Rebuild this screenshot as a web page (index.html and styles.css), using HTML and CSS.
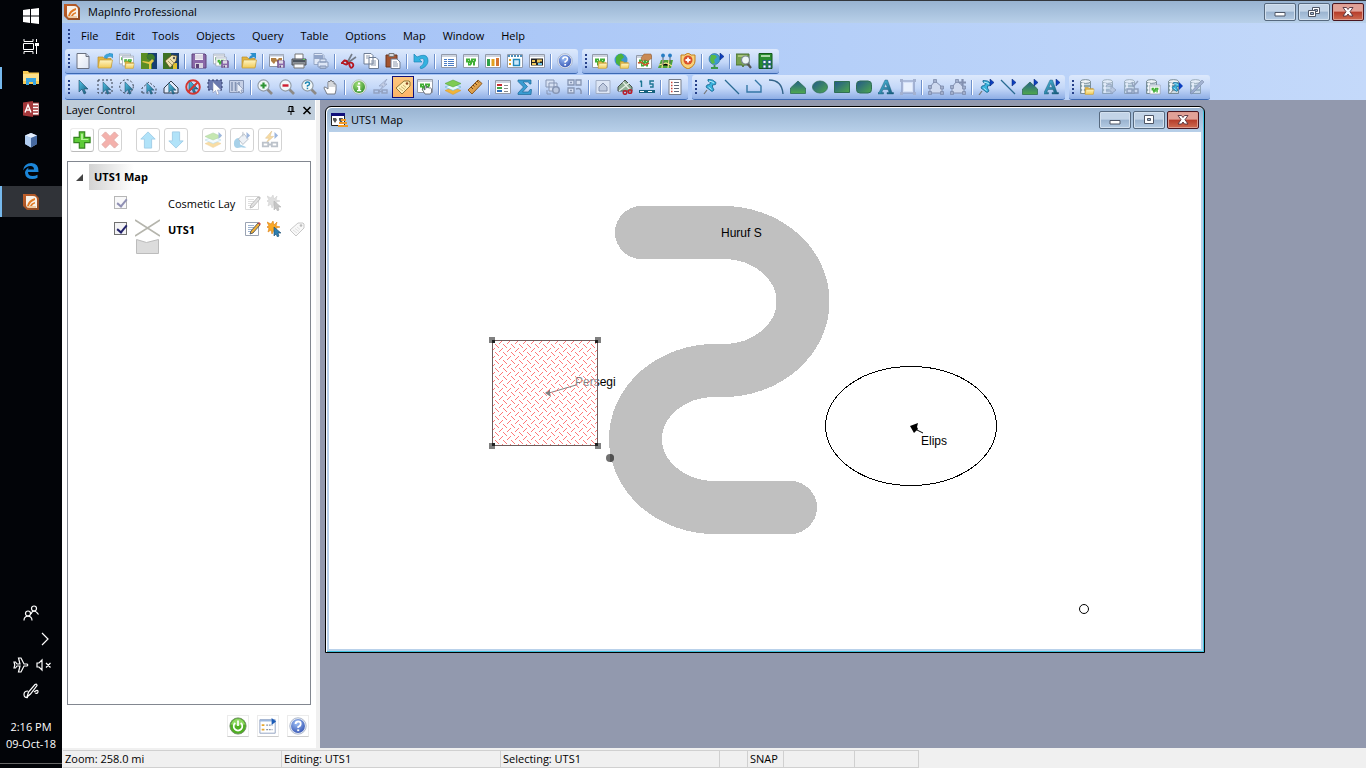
FILE: index.html
```html
<!DOCTYPE html>
<html lang="en">
<head>
<meta charset="utf-8">
<title>MapInfo Professional</title>
<link rel="stylesheet" href="styles.css">
</head>
<body>
<svg class="sprite" aria-hidden="true">
  <defs>
    <linearGradient id="g-green" x1="0" y1="0" x2="1" y2="1"><stop offset="0" stop-color="#22578c"/><stop offset="1" stop-color="#4fa84c"/></linearGradient>
    <linearGradient id="g-greenv" x1="0" y1="0" x2="0" y2="1"><stop offset="0" stop-color="#25608a"/><stop offset="1" stop-color="#4fa84c"/></linearGradient>
    <linearGradient id="g-cyan" x1="0" y1="0" x2="1" y2="1"><stop offset="0" stop-color="#53c4e8"/><stop offset="1" stop-color="#135878"/></linearGradient>
    <linearGradient id="g-folder" x1="0" y1="0" x2="0" y2="1"><stop offset="0" stop-color="#fff6c4"/><stop offset="1" stop-color="#f0c955"/></linearGradient>
    <linearGradient id="g-doc" x1="0" y1="0" x2="1" y2="1"><stop offset="0" stop-color="#fff"/><stop offset="1" stop-color="#dce4f2"/></linearGradient>
    <radialGradient id="g-ball" cx=".4" cy=".3" r=".8"><stop offset="0" stop-color="#9fc0f5"/><stop offset="1" stop-color="#2f4fb0"/></radialGradient>
    <radialGradient id="g-gball" cx=".4" cy=".3" r=".8"><stop offset="0" stop-color="#a6e07a"/><stop offset="1" stop-color="#2b8a25"/></radialGradient>
    <linearGradient id="g-orange" x1="0" y1="0" x2="1" y2="1"><stop offset="0" stop-color="#c2602a"/><stop offset="1" stop-color="#8e4a22"/></linearGradient>
  </defs>

  <symbol id="cursor" viewBox="0 0 16 16"><path d="M4 1v12l3-3 2 5 2-1-2-4h4z" fill="url(#g-cyan)" stroke="#1c4a66" stroke-width=".6"/></symbol>
  <symbol id="folder" viewBox="0 0 16 16"><path d="M1 14V4h5l1 1.500h7V14z" fill="#e3b640" stroke="#b98d2c" stroke-width=".7"/><path d="M1 15l1.500-8h13L14 15z" fill="url(#g-folder)" stroke="#c29a35" stroke-width=".7"/></symbol>
  <symbol id="mapwin" viewBox="0 0 16 16"><path d="M.5 1.500h15v13H.5z" fill="#fff" stroke="#929aaa"/><path d="M1 2h14v2H1z" fill="#cdd4df"/><path d="M3 5.500h4v2h1v-2h5v3h-1v4h-2v-3H9v2H8v1H5v-3H3z" fill="#3fae35"/><path d="M5 7h1v1H5zM10 7h1v1h-1zM6 10h1v1H6z" fill="#b6e6a8"/></symbol>
  <symbol id="floppy" viewBox="0 0 16 16"><path d="M1 1h13l1 1v13H1z" fill="#8a68a8" stroke="#5e457c"/><path d="M4 1h8v6H4z" fill="#f0eef5"/><path d="M4 3h8M4 5h8" stroke="#bbb5c8" stroke-width=".7"/><path d="M4 10h8v5H4z" fill="#d8d4e0"/><path d="M5 11h3v4H5z" fill="#5c4278"/></symbol>
  <symbol id="db" viewBox="0 0 16 16"><path d="M1.500 2.500h10v12h-10z" fill="#cddbe3" stroke="#6f858f" stroke-width=".9"/><ellipse cx="6.500" cy="2.500" rx="5" ry="1.900" fill="#eef4f8" stroke="#6f858f" stroke-width=".9"/><path d="M2 7h9M2 11h9" stroke="#47707a" stroke-width="1.200"/><path d="M4 4v10" stroke="#fff" stroke-width="1.600"/></symbol>
  <symbol id="flyout" viewBox="0 0 16 16"><path d="M12 0l4 3.500-4 3.500z" fill="#0c3fc0" stroke="#06246f" stroke-width=".5"/></symbol>
  <symbol id="help" viewBox="0 0 16 16"><circle cx="8" cy="8" r="7.300" fill="#eef2fa" stroke="#9aa6bd" stroke-width=".7"/><circle cx="8" cy="8" r="6.200" fill="url(#g-ball)"/><path d="M5.800 6.200Q6 4 8.200 4t2.200 2-2.200 2.700v1.100" fill="none" stroke="#fff" stroke-width="1.600"/><path d="M7.300 11h1.800v1.600H7.300z" fill="#fff"/></symbol>
  <symbol id="lens" viewBox="0 0 16 16"><path d="M10 10l5 5" stroke="#8d8a86" stroke-width="2.600"/><circle cx="6.500" cy="6.500" r="5.600" fill="#f1f7f8" stroke="#8f9aa6" stroke-width="1.100"/></symbol>
  <symbol id="pin" viewBox="0 0 16 16"><path d="M2 15l3-4" stroke="#777" stroke-width="1.200"/><path d="M6 .500q5-.500 8 3l-.500 2-3 .500v2l1.500 3-2 1.500-6-4.500 1-2 2.500-.500 1-2-2.500-1.500z" fill="#38b2dc" stroke="#1d6d96" stroke-width=".9"/><path d="M7 2.200q3 0 5 1.800M6.500 8l3 2.500" stroke="#b7ecfc" fill="none"/></symbol>
  <symbol id="layers" viewBox="0 0 16 16"><path d="M0 11.500l8-3 8 3-8 4z" fill="#f0b43a" stroke="#cf8f1d" stroke-width=".4"/><path d="M0 8l8-3 8 3-8 3.500z" fill="#e9f8fd" stroke="#6fb9d4" stroke-width=".7"/><path d="M0 4.500L8 1l8 3.500L8 8z" fill="#7fcb53" stroke="#4d9c33" stroke-width=".5"/></symbol>
  <symbol id="letter" viewBox="0 0 16 16"><path d="M0 15v-1.500h1L7 1h2.500L14 13.500h1.500V15H9v-1.500h2l-1-3H5l-1.200 3h1.700V15zM6 8.500h3.300L7.700 4.500z" fill="url(#g-cyan)" fill-rule="evenodd" stroke="#155470" stroke-width=".4"/></symbol>
  <symbol id="line" viewBox="0 0 16 16"><path d="M1 1l14 14" stroke="#2a6b92" stroke-width="1.300"/></symbol>
  <symbol id="polygon" viewBox="0 0 16 16"><path d="M.5 14.500V9L8 2l7.500 7v5.500z" fill="url(#g-greenv)" stroke="#2f6f54" stroke-width=".8"/></symbol>

  <symbol id="new" viewBox="0 0 16 16"><path d="M2 .5h9l3 3v12H2z" fill="url(#g-doc)" stroke="#6a7180"/><path d="M11 .5v3h3" fill="#cbd3e2" stroke="#6a7180"/></symbol>
  <symbol id="open" viewBox="0 0 16 16"><use href="#folder"/><path d="M7 4.500q1-4 5-3.500V0l4 1v4l-2-1.500q-3-1-4 2z" fill="#3aa5dc" stroke="#1c78ad" stroke-width=".4"/></symbol>
  <symbol id="workspace" viewBox="0 0 16 16"><use href="#mapwin" width="12" height="12"/><use href="#mapwin" x="3" y="2" width="12" height="12"/><use href="#folder" x="5" y="6" width="11" height="10"/></symbol>
  <symbol id="universal" viewBox="0 0 16 16"><path d="M0 0h16v16H0z" fill="#5b8e24"/><path d="M7 0h9v16h-5V9L6 5z" fill="#173d72"/><path d="M5 3q6-5 9 1l-1 4-3-2-1 2z" fill="#3f7d2a"/><path d="M2 8l6 1 3-3 2 2-3 3v5H8v-5L1 9z" fill="#e8c94a"/></symbol>
  <symbol id="tagmap" viewBox="0 0 16 16"><path d="M0 0h16v16H0z" fill="#3f7224"/><path d="M8 0h8v16h-6z" fill="#173d72"/><path d="M10 10h4v6h-4z" fill="#dec02e"/><path d="M2 8l7-6 5 1-1 5-6 7z" fill="#efe0ac" stroke="#60501f" stroke-width=".8"/><circle cx="11" cy="5" r="1.200" fill="#555"/><path d="M5 8l4 4M7 6l4 4" stroke="#8a7743" stroke-width=".7"/></symbol>
  <symbol id="savews" viewBox="0 0 16 16"><use href="#mapwin" width="12" height="12"/><use href="#mapwin" x="2" y="3" width="12" height="11"/><use href="#floppy" x="8" y="7" width="8" height="8"/></symbol>
  <symbol id="closetab" viewBox="0 0 16 16"><use href="#folder"/><path d="M15 6V0H9l2 2q-3 1-3 4l5-2z" fill="#2b90cd"/></symbol>
  <symbol id="savewin" viewBox="0 0 16 16"><path d="M.5 1.500h14v12H.5z" fill="#fff" stroke="#8b93a3"/><path d="M.5 1.500h14v2H.5z" fill="#bbc4d4"/><path d="M2 5h5l1 2 2-2h3v5H9L7 8l-2 3-3-3z" fill="#b07f44"/><use href="#floppy" x="8" y="7" width="8" height="8"/></symbol>
  <symbol id="print" viewBox="0 0 16 16"><path d="M4 1h8v6H4z" fill="#fff" stroke="#777"/><path d="M1 6h14v6H1z" fill="#8b9199" stroke="#4c5057"/><path d="M2 8h12" stroke="#37414c" stroke-width="1.500"/><path d="M3 11h10v4H3z" fill="#f6f8fb" stroke="#777"/><path d="M12 6.500h2" stroke="#5bd35b"/></symbol>
  <symbol id="pdf" viewBox="0 0 16 16"><path d="M1 .5h8l2 2v9H1z" fill="#e1e9f7" stroke="#96a7c5"/><path d="M1 2h9v4H1z" fill="#92a5c8"/><path d="M5 9h10v5H5zM7 6h6v3H7zM7 13h6v2.500H7z" fill="#dde6f6" stroke="#8799ba"/></symbol>
  <symbol id="cut" viewBox="0 0 16 16"><path d="M11 1L6 10M15 4L5 11" stroke="#747c88" stroke-width="1.600"/><path d="M3.500 7.500q3 0 3 2.500t-3 1-3-1 3-2.500zM8 10q3-1 4 1t-1 3.500-3-4.500z" fill="none" stroke="#b51620" stroke-width="1.800"/></symbol>
  <symbol id="copy" viewBox="0 0 16 16"><path d="M1 .5h7l2 2V11H1zM6 4.500h7l2.500 2.500v8.500H6z" fill="#fff" stroke="#6e7d94"/><path d="M3 3h4M3 5h3M8 8h5M8 10h5M8 12h5" stroke="#8a97ac"/></symbol>
  <symbol id="paste" viewBox="0 0 16 16"><path d="M1 2h11v12H1z" fill="#a3532f" stroke="#6b3721"/><path d="M4 .5h5v3H4z" fill="#d8d8dc" stroke="#777"/><path d="M6 6h6l3 3v6.500H6z" fill="#fff" stroke="#6e7d94"/><path d="M8 9h4M8 11h5M8 13h5" stroke="#8a97ac"/></symbol>
  <symbol id="undo" viewBox="0 0 16 16"><path d="M1 1v8h8L6.500 6.500Q11 4 11 8t-4 6l1 2q7-3 7-8 0-7-7-5.500L4 4z" fill="#34b2e0" stroke="#1d85b8" stroke-width=".7"/></symbol>
  <symbol id="browser" viewBox="0 0 16 16"><path d="M.5 1.500h15v13H.5z" fill="#fff" stroke="#929aaa"/><path d="M1 2h14v2H1z" fill="#cdd4df"/><path d="M3 6.500h3M7 6.500h6M3 8.500h3M7 8.500h6M3 10.500h3M7 10.500h6M3 12.500h3M7 12.500h6" fill="none" stroke="#4a7cc4"/></symbol>
  <symbol id="graph" viewBox="0 0 16 16"><path d="M.5 1.500h15v13H.5z" fill="#fff" stroke="#929aaa"/><path d="M1 2h14v2H1z" fill="#cdd4df"/><path d="M2 6h3v7H2z" fill="#2fa14a"/><path d="M6.500 6h3v7h-3z" fill="#e2a120"/><path d="M11 5h3v8h-3z" fill="#d5732f"/></symbol>
  <symbol id="layout" viewBox="0 0 16 16"><path d="M.5 1.500h15v13H.5z" fill="#fff" stroke="#929aaa"/><path d="M1 3h14" stroke="#4c8dbb" stroke-width="2" stroke-dasharray="2 1"/><path d="M6.500 6.500h6v6h-6z" fill="#cde9fa" stroke="#2288bc" stroke-width="1.400"/><path d="M2 6h2v2H2zM2 10h2v2H2z" fill="#e2a120"/></symbol>
  <symbol id="redistrict" viewBox="0 0 16 16"><path d="M.5 1.500h15v13H.5z" fill="#fff" stroke="#929aaa"/><path d="M1 2h14v2H1z" fill="#cdd4df"/><path d="M2 5.500h12v7H2z" fill="#222"/><path d="M3 7h3v2H3zM8 6.500h5v2h-2v1H8zM3 10h4v2H3z" fill="#eec85e"/><path d="M9 10h4v2H9z" fill="#6ec3e6"/></symbol>

  <symbol id="mapfolder" viewBox="0 0 16 16"><use href="#mapwin"/><use href="#folder" x="5" y="6" width="11" height="10"/></symbol>
  <symbol id="globefolder" viewBox="0 0 16 16"><circle cx="7" cy="7" r="6.500" fill="#3f96ca"/><path d="M2 4q3-4 6-3l2 3-3 3 2 2-3 4-4-3z" fill="#4bb23b"/><use href="#folder" x="5" y="6" width="11" height="10"/></symbol>
  <symbol id="maphand" viewBox="0 0 16 16"><use href="#mapwin" y="1"/><path d="M5 5l3-4h7l1 4-4 3-3-1-3 1z" fill="#c98a55" stroke="#8d5a31" stroke-width=".5"/><path d="M2 10l3-1 4 3 4-2" stroke="#d4552d" fill="none" stroke-width="1.500"/></symbol>
  <symbol id="geocode" viewBox="0 0 16 16"><path d="M3 7h12l-2 8H0z" fill="#4da23a"/><path d="M1 12l7-2 6 3M5 7l-1 8M11 7l-1 8" stroke="#f6e78d" stroke-width="1.200"/><path d="M5 3v9M12 3v7" stroke="#58606c"/><circle cx="5" cy="2.500" r="1.900" fill="#267dc4"/><circle cx="12" cy="2.500" r="1.900" fill="#267dc4"/></symbol>
  <symbol id="shield" viewBox="0 0 16 16"><path d="M1 2q4 1 7-2 3 3 7 2v6q0 5-7 8-7-3-7-8z" fill="#f8d27a" stroke="#c37c17"/><circle cx="8" cy="7" r="4.500" fill="#d9512d"/><path d="M8 4.500v5M5.500 7h5" stroke="#fff" stroke-width="1.800"/></symbol>
  <symbol id="globego" viewBox="0 0 16 16"><circle cx="6.500" cy="6" r="5.500" fill="#3c9bce" stroke="#2a6b92" stroke-width=".6"/><path d="M3 2h4l2 2-3 3 1 3-3 1-2-4z" fill="#58b947"/><path d="M6.500 12v2M3 15h7" stroke="#3b9849" stroke-width="1.800"/><use href="#flyout"/></symbol>
  <symbol id="findmap" viewBox="0 0 16 16"><path d="M0 1h13v11H8l-1 2-1-2H0z" fill="#76a04f" stroke="#4b7135"/><path d="M2 3h9" stroke="#dbe9a6"/><path d="M11 10l4 5" stroke="#555" stroke-width="2.200"/><circle cx="9.500" cy="7" r="4" fill="#edf5f5" stroke="#7c8894" stroke-width="1.200"/></symbol>
  <symbol id="greentable" viewBox="0 0 16 16"><path d="M1 .5h13v15H1z" fill="#2a8c2f" stroke="#15581c"/><path d="M3 3h9" stroke="#d6f0d0" stroke-width="1.500"/><path d="M5 7.500h3v3H5zM10 7.500h3v3h-3zM5 12h3v3H5zM10 12h3v3h-3z" fill="#fff" stroke="#17508c" stroke-width=".8"/></symbol>

  <symbol id="marquee" viewBox="0 0 16 16"><path d="M1 1h14v13H1z" fill="none" stroke="#333b48" stroke-dasharray="2 2"/><use href="#cursor" x="2" y="2" width="15" height="14"/></symbol>
  <symbol id="radius" viewBox="0 0 16 16"><circle cx="7.500" cy="7.500" r="6.800" fill="none" stroke="#333b48" stroke-dasharray="2 2"/><use href="#cursor" x="2" y="2" width="15" height="14"/></symbol>
  <symbol id="polysel" viewBox="0 0 16 16"><path d="M1 14V9l7-6 7 6v5z" fill="none" stroke="#333b48" stroke-dasharray="2 2"/><use href="#cursor" x="2" y="3" width="14" height="13"/></symbol>
  <symbol id="boundsel" viewBox="0 0 16 16"><path d="M1 14V9l7-7 7 7v5z" fill="#e1ebfb" stroke="#333b48"/><use href="#cursor" x="2" y="3" width="14" height="13"/></symbol>
  <symbol id="unselect" viewBox="0 0 16 16"><use href="#cursor"/><circle cx="8" cy="8" r="6.800" fill="none" stroke="#d5362f" stroke-width="1.900"/><path d="M3.500 12.500l9-9" stroke="#d5362f" stroke-width="1.900"/></symbol>
  <symbol id="invert" viewBox="0 0 16 16"><path d="M1 1h14v10H1z" fill="#6b79ae" stroke="#2f3a68" stroke-dasharray="2 2"/><path d="M6 3v11l2.500-2.500L10 16l2-1-1.500-4H14z" fill="#fff" stroke="#8b94b6" stroke-width=".6"/></symbol>
  <symbol id="graphsel" viewBox="0 0 16 16"><path d="M.5 1.500h14v12H.5z" fill="#c6d0e6" stroke="#8393b4"/><path d="M3 3v9M6.500 3v9M10 3v9" stroke="#8393b4" stroke-width="1.500"/><path d="M8 4v10l2-2 2 3 1-1-1-3h3z" fill="#e8edf7" stroke="#8393b4" stroke-width=".7"/></symbol>
  <symbol id="zoomin" viewBox="0 0 16 16"><use href="#lens"/><path d="M6.500 3.500v6M3.500 6.500h6" stroke="#2f9434" stroke-width="2.200"/></symbol>
  <symbol id="zoomout" viewBox="0 0 16 16"><use href="#lens"/><path d="M3.500 6.500h6" stroke="#cf1f2f" stroke-width="2.400"/></symbol>
  <symbol id="zoomq" viewBox="0 0 16 16"><use href="#lens"/><path d="M4.500 5q0-2 2-2t2 1.700-2 2.100v1" fill="none" stroke="#1f88b5" stroke-width="1.500"/><path d="M5.700 8.700h1.500v1.500H5.700z" fill="#1f88b5"/></symbol>
  <symbol id="hand" viewBox="0 0 16 16"><path d="M4 15l-3-6q0-2 2-.5L5 10V3q1-2 2 0V2q1-2 2 0v1q1-1.500 2 0v2q2-1 2 1v5l-1 4z" fill="#fff" stroke="#6b6f78" stroke-width=".9"/><path d="M7 3v5M9 3v5M11 4v4" stroke="#8b8f98" stroke-width=".7"/></symbol>
  <symbol id="info" viewBox="0 0 16 16"><circle cx="8" cy="8" r="7.200" fill="#e3eee3" stroke="#9daa9d" stroke-width=".6"/><circle cx="8" cy="8" r="6" fill="url(#g-gball)"/><path d="M7 3.500h2.200v2H7zM6.200 6.800h3v4.200h1v1.300H6v-1.300h1.200V8h-1z" fill="#fff"/></symbol>
  <symbol id="hotlink" viewBox="0 0 16 16"><path d="M14 0L6 7h4l-4 5 8-7h-3z" fill="#c4cfe6" stroke="#93a2c1" stroke-width=".7"/><path d="M1 11h5v3H1zM9 11h5v3H9zM5 12.500h5" fill="none" stroke="#93a2c1" stroke-width="1.400"/></symbol>
  <symbol id="tag" viewBox="0 0 16 16"><path d="M1 9l8-7h5l1 1v4l-8 8z" fill="#fff0b8" stroke="#8f7537"/><circle cx="12" cy="4.500" r="1.300" fill="#8e4a22"/><path d="M4 9l4 3M6 7.500l4 3M8 6l3 2.500" stroke="#bda35d" stroke-width=".8"/></symbol>
  <symbol id="dragmap" viewBox="0 0 16 16"><use href="#mapwin" y="-1"/><path d="M8 15l-3-5q1-1 3 1V7q1-1 1.500 0v2q1-1 1.500 0 1-1 1.500 0 1-1 2 1v3l-1 2z" fill="#fff" stroke="#555c68" stroke-width=".8"/></symbol>
  <symbol id="ruler" viewBox="0 0 16 16"><path d="M1 11L11 1l4 3.500L5 15z" fill="#dea04b" stroke="#8d5a22"/><path d="M4 8l2 2M6 6l1.500 1.500M8 4l2 2M10 2l1.500 1.500" stroke="#6b421a"/></symbol>
  <symbol id="legend" viewBox="0 0 16 16"><path d="M.5 1.500h15v13H.5z" fill="#fff" stroke="#929aaa"/><path d="M1 2h14v2H1z" fill="#cdd4df"/><path d="M2 5h5v2H2z" fill="#c62f35"/><path d="M2 8h5v2H2z" fill="#3ca244"/><path d="M2 11h5v2H2z" fill="#2c6cb9"/><path d="M9 6.500h4M9 9.500h4M9 12.500h4" stroke="#888"/></symbol>
  <symbol id="sigma" viewBox="0 0 16 16"><path d="M1 1h13v4h-1.500l-1-2H6l4.500 4.500L5.500 13h6l1.500-2.500h1.500L14 15.500H1V14l5.500-6L1 2.500z" fill="#3a9cd2" stroke="#1c6797" stroke-width=".7"/></symbol>
  <symbol id="target" viewBox="0 0 16 16"><path d="M1 1h8v7H1zM4 4h8v8H4z" fill="#d7e1f3" stroke="#8695b3"/><circle cx="11" cy="11" r="3.300" fill="#bac7df" stroke="#8695b3" stroke-width="1.500"/><path d="M2 11v4h4" fill="none" stroke="#8695b3"/></symbol>
  <symbol id="assign" viewBox="0 0 16 16"><path d="M1 1h6v5H1zM1 9h6v5H1zM9 1h5v5H9z" fill="#d7e1f3" stroke="#8695b3" stroke-width="1.300"/><path d="M9 10q6-2 5 5M3 3.500h2M3 11.500h2" fill="none" stroke="#8695b3" stroke-width="1.500"/></symbol>
  <symbol id="cliptarget" viewBox="0 0 16 16"><path d="M1 1.500h14v13H1z" fill="#dde6f5" stroke="#a1aec6"/><path d="M4 12V8l4-4 4 4v4z" fill="#c1cce0" stroke="#8592ae"/></symbol>
  <symbol id="clip" viewBox="0 0 16 16"><path d="M1 12V8l7-7 7 7v4z" fill="#8fae94" stroke="#454f4c"/><path d="M2 12L12 4M6 3l7 8" stroke="#e6eee4" stroke-width="1.300"/><circle cx="8" cy="13.500" r="1.800" fill="none" stroke="#ba1d2a" stroke-width="1.500"/><circle cx="13" cy="12.500" r="1.800" fill="none" stroke="#ba1d2a" stroke-width="1.500"/></symbol>
  <symbol id="scale" viewBox="0 0 16 16"><path d="M2.500 2v6M1 3l1.500-1.500M11 8h3V5h-3V2h4" fill="none" stroke="#1d7694" stroke-width="1.400"/><path d="M0 11h16v3H0z" fill="#17627d"/><path d="M1 12.500h4M9 12.500h4" stroke="#fff" stroke-width="1.200"/></symbol>
  <symbol id="stats" viewBox="0 0 16 16"><path d="M2 .5h12v15H2z" fill="#fff" stroke="#747c8a"/><path d="M4 3.500h1.500M4 6.500h1.500M4 9.500h1.500M4 12.500h1.500" stroke="#c9473b" stroke-width="1.300"/><path d="M7 3.500h5M7 6.500h5M7 9.500h5M7 12.500h5" stroke="#60697a"/></symbol>
  <symbol id="polyline" viewBox="0 0 16 16"><path d="M9 1l6 6v6H1V6" fill="none" stroke="#3577a5" stroke-width="1.400"/></symbol>
  <symbol id="arc" viewBox="0 0 16 16"><path d="M1 1q13 0 14 14" fill="none" stroke="#33648a" stroke-width="1.400"/></symbol>
  <symbol id="ellipse" viewBox="0 0 16 16"><ellipse cx="8" cy="8" rx="7.500" ry="6" fill="url(#g-green)" stroke="#2f6f54" stroke-width=".8"/></symbol>
  <symbol id="rect" viewBox="0 0 16 16"><path d="M.5 2.500h15v11H.5z" fill="url(#g-green)" stroke="#2f6f54"/></symbol>
  <symbol id="rrect" viewBox="0 0 16 16"><rect x=".5" y="2" width="15" height="12" rx="3.500" fill="url(#g-green)" stroke="#2f6f54"/></symbol>
  <symbol id="frame" viewBox="0 0 16 16"><path d="M2 2h12v12H2z" fill="#d5e1f8" stroke="#8695bb" stroke-width="1.200"/><path d="M0 0h3v3H0zM13 0h3v3h-3zM0 13h3v3H0zM13 13h3v3h-3z" fill="#a3b1d0"/><path d="M4 4h8v8H4z" fill="#e8f0fd"/></symbol>
  <symbol id="reshape" viewBox="0 0 16 16"><path d="M2 14V8l5-6 7 6v6z" fill="#cfdaf0" stroke="#8390b0"/><path d="M.5 12.500h3v3h-3zM.5 6.500h3v3h-3zM5.500.5h3v3h-3zM12.500 7h3v3h-3zM12.500 12.500h3v3h-3z" fill="#a2afcc" stroke="#7785a6" stroke-width=".7"/></symbol>
  <symbol id="addnode" viewBox="0 0 16 16"><use href="#reshape"/><path d="M12.500 0v7M9 3.500h7" stroke="#8390b0" stroke-width="2.200"/></symbol>
  <symbol id="pinstyle" viewBox="0 0 16 16"><use href="#pin" x="-1" y="1"/><use href="#flyout"/></symbol>
  <symbol id="linestyle" viewBox="0 0 16 16"><use href="#line"/><use href="#flyout"/></symbol>
  <symbol id="regionstyle" viewBox="0 0 16 16"><use href="#polygon" y="1"/><use href="#flyout"/></symbol>
  <symbol id="textstyle" viewBox="0 0 16 16"><use href="#letter" x="-1"/><use href="#flyout"/></symbol>
  <symbol id="dbopen" viewBox="0 0 16 16"><use href="#db"/><use href="#folder" x="5" y="6" width="11" height="10"/></symbol>
  <symbol id="dbrefresh" viewBox="0 0 16 16"><g opacity=".6"><use href="#db"/><path d="M5 8q1-4 6-2M5 12h5v3l5-4-5-4v3" fill="#b5c0d3" stroke="#7c8aa3"/></g></symbol>
  <symbol id="dbunlink" viewBox="0 0 16 16"><g opacity=".6"><use href="#db"/><path d="M4 10h5v4H4zM11 10h4v4h-4zM10 8l5-6M9 3l1 4" fill="#d9e1ee" stroke="#6f7d96" stroke-width="1.400"/></g></symbol>
  <symbol id="dbmap" viewBox="0 0 16 16"><use href="#db"/><use href="#mapwin" x="4" y="5" width="12" height="11"/></symbol>
  <symbol id="dbpin" viewBox="0 0 16 16"><use href="#db"/><use href="#pin" x="2" y="3" width="12" height="12"/><path d="M12 3l4 4-4 4z" fill="#0c3fc0"/></symbol>
  <symbol id="dbedit" viewBox="0 0 16 16"><g opacity=".65"><use href="#db"/><path d="M1 14L13 1l2 2L3 15z" fill="#8d9cbc" stroke="#60708f" stroke-width=".7"/></g></symbol>

  <symbol id="app" viewBox="0 0 16 16"><path d="M0 0h12l4 4v12H4l-4-4z" fill="url(#g-orange)"/><path d="M3 2h7q4 0 4 4v8H6q-3 0-3-4z" fill="#f7f1e8"/><path d="M4 12Q5 6 12 4v2Q7 8 6 12zM7 12q1-3 5-4v1.500Q9.500 10 9 12z" fill="#e07a25"/><path d="M4 13h9" stroke="#e6a35c"/></symbol>
  <symbol id="plus" viewBox="0 0 20 20"><path d="M7 1h6v6h6v6h-6v6H7v-6H1V7h6z" fill="#5ecb39" stroke="#34841f" stroke-width="1.300"/><path d="M9 3h2v6h6v1H9z" fill="#b9f39c"/></symbol>
  <symbol id="cross" viewBox="0 0 20 20"><path d="M5 1l5 5 5-5 4 4-5 5 5 5-4 4-5-5-5 5-4-4 5-5-5-5z" fill="#e8554a" stroke="#b93b31"/></symbol>
  <symbol id="up" viewBox="0 0 20 20"><path d="M10 1l8 8h-4v10H6V9H2z" fill="#55c2f2" stroke="#2b90cb"/></symbol>
  <symbol id="down" viewBox="0 0 20 20"><path d="M10 19l8-8h-4V1H6v10H2z" fill="#55c2f2" stroke="#2b90cb"/></symbol>
  <symbol id="layersgo" viewBox="0 0 20 20"><use href="#layers" y="1" width="18" height="18"/><path d="M15 1l4 4-4 4z" fill="#2760b4"/></symbol>
  <symbol id="bucket" viewBox="0 0 20 20"><path d="M9 8q-8-1-8 6t8 4q4 1 6 0l-7-3q-1-4 1-7z" fill="#3d9bd0"/><path d="M6 9l6-6 5 6-6 6z" fill="#d8e2ec" stroke="#5a6b80"/><path d="M11 6V1" stroke="#5a6b80"/><path d="M15 1l4 4-4 4z" fill="#2760b4"/></symbol>
  <symbol id="linkgo" viewBox="0 0 20 20"><path d="M12 0L5 8h4l-3 5 8-7h-4z" fill="#f0b02e" stroke="#b9821d" stroke-width=".7"/><path d="M2 13h6v4H2zM12 13h6v4h-6zM7 15h6" fill="none" stroke="#6c7a8b" stroke-width="2"/><path d="M15 1l4 4-4 4z" fill="#2760b4"/></symbol>
  <symbol id="power" viewBox="0 0 20 20"><circle cx="10" cy="10" r="9" fill="#4faf22" stroke="#6d8a62"/><path d="M2 8q3-6 8-6t8 6q-8 3-16 0z" fill="#8ed862"/><path d="M7 6.500a4.800 4.800 0 1 0 6 0M10 4v6" fill="none" stroke="#fff" stroke-width="1.900"/></symbol>
  <symbol id="listgo" viewBox="0 0 20 20"><path d="M1 3h17v15H1z" fill="#fff" stroke="#8b9dbd"/><path d="M1 3h17v2H1z" fill="#9db8de"/><path d="M3 8h3v2H3zM3 13h3v2H3z" fill="#e8a72c"/><path d="M8 9h7M8 14h7" stroke="#8893a6" stroke-width="1.500" stroke-dasharray="2 1"/><path d="M14 1l5 4-5 4z" fill="#1c5cb8"/></symbol>
  <symbol id="edit" viewBox="0 0 16 16"><path d="M.5 1.500h13v13H.5z" fill="#fff" stroke="#9aa3b3"/><path d="M3 4.500h6M3 6.500h6M3 8.500h4M3 10.500h3" stroke="#9db3d0"/><path d="M5 13l1-3 7-8 2 2-7 8z" fill="#f0b038" stroke="#39465a" stroke-width=".8"/><path d="M13 2l1-1 2 2-1 1z" fill="#d4473c"/></symbol>
  <symbol id="select" viewBox="0 0 16 16"><path d="M6 0l1 4 3-3-1 4 4 1-4 1 1 4-3-2-2 4-1-4-3 2 1-4-3-1 3-1-2-4 4 2z" fill="#f9a825" stroke="#db7f14" stroke-width=".6"/><path d="M7 6v9l2-2 1.500 3 1.500-1-1-3h3z" fill="#2e7fb0" stroke="#174c70" stroke-width=".6"/></symbol>
  <symbol id="win-min" viewBox="0 0 12 10"><path d="M1 5.500h10v3.500H1z" fill="#fff" stroke="#4e5666"/></symbol>
  <symbol id="win-restore" viewBox="0 0 12 10"><path d="M4.500.5h7v6h-7z" fill="#fff" stroke="#4e5666"/><path d="M6.500 2.500h3v2h-3z" fill="#9eb6d1" stroke="#4e5666"/><path d="M.5 3.500h7v6h-7z" fill="#fff" stroke="#4e5666"/><path d="M2.500 5.500h3v2h-3z" fill="#9eb6d1" stroke="#4e5666"/></symbol>
  <symbol id="win-max" viewBox="0 0 12 10"><path d="M1.500.5h9v8h-9z" fill="#fff" stroke="#4e5666"/><path d="M4.500 3.500h3v2h-3z" fill="#9eb6d1" stroke="#4e5666"/></symbol>
  <symbol id="win-close" viewBox="0 0 12 10"><path d="M1 .5h3.500L6 2.500 7.500.5H11L8 4.700 11 9H7.500L6 7 4.500 9H1l3-4.300z" fill="#fff" stroke="#53303a" stroke-width=".9"/></symbol>
</svg>

<nav class="taskbar" aria-label="Taskbar">
  <button class="task" aria-label="Start"><svg viewBox="0 0 16 16"><path d="M0 2l7-1v6.500H0zM8 1l8-1v7.500H8zM0 8.500h7V15l-7-1zM8 8.500h8V16l-8-1z" fill="#fff"/></svg></button>
  <button class="task" aria-label="Task view"><svg viewBox="0 0 16 16"><path d="M1 0v2.500h9V0M1 15v-2.500h9V15M.5 4.500h10v6H.5zM13.500 0v3M13.500 7v8" fill="none" stroke="#fff"/><path d="M12 4h4v3h-4z" fill="#fff"/></svg></button>
  <button class="task running" aria-label="File Explorer"><svg viewBox="0 0 16 16"><path d="M0 1h5l1 1.500h10V14H0z" fill="#f6ca54"/><path d="M0 4h16v7H0z" fill="#fde08a"/><path d="M3 8h10v7h-3v-3H6v3H3z" fill="#3aa5e0"/></svg></button>
  <button class="task" aria-label="Access"><svg viewBox="0 0 16 16"><path d="M9 2h7v12H9z" fill="#fff" stroke="#a4373a"/><path d="M10 5h5M10 8h5M10 11h5" stroke="#a4373a" stroke-width="1.500"/><path d="M0 1.500L10 0v16L0 14.500z" fill="#a4373a"/><path d="M2 11.500L5 4l3 7.500M3 9h4" fill="none" stroke="#fff" stroke-width="1.400"/></svg></button>
  <button class="task" aria-label="VirtualBox"><svg viewBox="0 0 16 16"><path d="M8 1l6 2.500v8.500L8 15.500 2 12V3.500z" fill="#8fb0dd"/><path d="M8 1l6 2.500L8 6 2 3.500z" fill="#e4eefb"/><path d="M8 6l6-2.500V12l-6 3.500z" fill="#46699f"/><path d="M2 3.500L8 6v9.500L2 12z" fill="#b1cdf0"/></svg></button>
  <button class="task" aria-label="Edge"><svg viewBox="0 0 16 16"><path d="M0 7.500Q1 0 8.500 0 16 .5 15.500 9H5q0 4 4.500 4 3 0 5-1.200v3Q12.500 16 9.500 16 2.500 16 2 10q0-3.500 4-5.500Q5 5.500 5 6.500h6Q11 3 7.500 3 3 3.200 0 7.500z" fill="#1c86d8"/></svg></button>
  <button class="task running current" aria-label="MapInfo Professional"><svg><use href="#app"/></svg></button>
  <div class="tray">
    <button class="trayicon" aria-label="People"><svg viewBox="0 0 16 16"><circle cx="11" cy="3.500" r="2.500"/><path d="M8 9q1-3 3-3t4.500 3.500"/><circle cx="5" cy="8.500" r="2.500"/><path d="M1 15.500q0-4 4-4.500 4 .5 4 4.500"/></svg></button>
    <button class="trayicon shifted" aria-label="Show hidden icons"><svg viewBox="0 0 16 16"><path d="M5 2l6 6-6 6"/></svg></button>
    <div class="traypair">
      <button class="trayicon" aria-label="Airplane mode"><svg viewBox="0 0 16 16"><path d="M1 5h1.500l1.500 2h3L5.500 1H8l3 6h3q1.500 1 0 2h-3l-3 6H5.500L7 9H4l-1.500 2H1l.8-3z"/></svg></button>
      <button class="trayicon" aria-label="Muted"><svg viewBox="0 0 16 16"><path d="M1 6h2l3-3v10l-3-3H1zM10 6l4.500 4.500M14.500 6L10 10.500"/></svg></button>
    </div>
    <button class="trayicon" aria-label="Ink workspace"><svg viewBox="0 0 16 16"><path d="M4 14l1.500-5L12 1.500q2-1 2 1L7.500 11 4 14M5 8q-4 0-4 3.500t4 3M11 9q4-3 4-.5t-3 1.500"/></svg></button>
    <div class="clock"><time>2:16 PM</time><time>09-Oct-18</time></div>
  </div>
  <button class="desktop" aria-label="Show desktop"></button>
</nav>

<div class="app">
  <header class="titlebar">
    <svg class="appicon"><use href="#app"/></svg>
    <h1 class="title">MapInfo Professional</h1>
    <div class="winbuttons">
      <button class="winbtn" aria-label="Minimize"><svg><use href="#win-min"/></svg></button>
      <button class="winbtn" aria-label="Restore"><svg><use href="#win-restore"/></svg></button>
      <button class="winbtn close" aria-label="Close"><svg><use href="#win-close"/></svg></button>
    </div>
  </header>

  <div class="bars">
    <nav class="menubar" aria-label="Menu">
      <span class="grip"></span>
      <button class="menu">File</button><button class="menu">Edit</button><button class="menu">Tools</button><button class="menu">Objects</button><button class="menu">Query</button><button class="menu">Table</button><button class="menu">Options</button><button class="menu">Map</button><button class="menu">Window</button><button class="menu">Help</button>
    </nav>

    <div class="barrow">
      <div class="toolbar" role="toolbar" aria-label="Standard">
        <span class="grip"></span>
        <button class="tool" aria-label="New Table"><svg><use href="#new"/></svg></button>
        <button class="tool" aria-label="Open"><svg><use href="#open"/></svg></button>
        <button class="tool" aria-label="Open Workspace"><svg><use href="#workspace"/></svg></button>
        <button class="tool" aria-label="Open Universal Data"><svg><use href="#universal"/></svg></button>
        <button class="tool" aria-label="Open Web Service"><svg><use href="#tagmap"/></svg></button>
        <span class="sep"></span>
        <button class="tool" aria-label="Save Table"><svg><use href="#floppy"/></svg></button>
        <button class="tool" aria-label="Save Workspace"><svg><use href="#savews"/></svg></button>
        <span class="sep"></span>
        <button class="tool" aria-label="Close Table"><svg><use href="#closetab"/></svg></button>
        <span class="sep"></span>
        <button class="tool" aria-label="Save Window As"><svg><use href="#savewin"/></svg></button>
        <button class="tool" aria-label="Print"><svg><use href="#print"/></svg></button>
        <button class="tool" aria-label="Print to PDF"><svg><use href="#pdf"/></svg></button>
        <span class="sep"></span>
        <button class="tool" aria-label="Cut"><svg><use href="#cut"/></svg></button>
        <button class="tool" aria-label="Copy"><svg><use href="#copy"/></svg></button>
        <button class="tool" aria-label="Paste"><svg><use href="#paste"/></svg></button>
        <span class="sep"></span>
        <button class="tool" aria-label="Undo"><svg><use href="#undo"/></svg></button>
        <span class="sep"></span>
        <button class="tool" aria-label="New Browser"><svg><use href="#browser"/></svg></button>
        <button class="tool" aria-label="New Mapper"><svg><use href="#mapwin"/></svg></button>
        <button class="tool" aria-label="New Grapher"><svg><use href="#graph"/></svg></button>
        <button class="tool" aria-label="New Layout"><svg><use href="#layout"/></svg></button>
        <button class="tool" aria-label="New Redistricter"><svg><use href="#redistrict"/></svg></button>
        <span class="sep"></span>
        <button class="tool" aria-label="Help"><svg><use href="#help"/></svg></button>
      </div>
      <div class="toolbar" role="toolbar" aria-label="Web Services">
        <span class="grip"></span>
        <button class="tool" aria-label="Open WMS"><svg><use href="#mapfolder"/></svg></button>
        <button class="tool" aria-label="Open WFS"><svg><use href="#globefolder"/></svg></button>
        <button class="tool" aria-label="Map Service"><svg><use href="#maphand"/></svg></button>
        <button class="tool" aria-label="Geocode"><svg><use href="#geocode"/></svg></button>
        <button class="tool" aria-label="Routing"><svg><use href="#shield"/></svg></button>
        <span class="sep"></span>
        <button class="tool" aria-label="Web Map"><svg><use href="#globego"/></svg></button>
        <span class="sep"></span>
        <button class="tool" aria-label="Catalog Search"><svg><use href="#findmap"/></svg></button>
        <button class="tool" aria-label="Catalog Table"><svg><use href="#greentable"/></svg></button>
      </div>
    </div>

    <div class="barrow">
      <div class="toolbar" role="toolbar" aria-label="Main">
        <span class="grip"></span>
        <button class="tool" aria-label="Select"><svg><use href="#cursor"/></svg></button>
        <button class="tool" aria-label="Marquee Select"><svg><use href="#marquee"/></svg></button>
        <button class="tool" aria-label="Radius Select"><svg><use href="#radius"/></svg></button>
        <button class="tool" aria-label="Polygon Select"><svg><use href="#polysel"/></svg></button>
        <button class="tool" aria-label="Boundary Select"><svg><use href="#boundsel"/></svg></button>
        <button class="tool" aria-label="Unselect All"><svg><use href="#unselect"/></svg></button>
        <button class="tool" aria-label="Invert Selection"><svg><use href="#invert"/></svg></button>
        <button class="tool" aria-label="Graph Select"><svg><use href="#graphsel"/></svg></button>
        <span class="sep"></span>
        <button class="tool" aria-label="Zoom In"><svg><use href="#zoomin"/></svg></button>
        <button class="tool" aria-label="Zoom Out"><svg><use href="#zoomout"/></svg></button>
        <button class="tool" aria-label="Change View"><svg><use href="#zoomq"/></svg></button>
        <button class="tool" aria-label="Grabber"><svg><use href="#hand"/></svg></button>
        <span class="sep"></span>
        <button class="tool" aria-label="Info"><svg><use href="#info"/></svg></button>
        <button class="tool" aria-label="Hot Link"><svg><use href="#hotlink"/></svg></button>
        <button class="tool pressed" aria-label="Label" aria-pressed="true"><svg><use href="#tag"/></svg></button>
        <button class="tool" aria-label="Drag Map"><svg><use href="#dragmap"/></svg></button>
        <span class="sep"></span>
        <button class="tool" aria-label="Layer Control"><svg><use href="#layers"/></svg></button>
        <button class="tool" aria-label="Ruler"><svg><use href="#ruler"/></svg></button>
        <span class="sep"></span>
        <button class="tool" aria-label="Legend"><svg><use href="#legend"/></svg></button>
        <button class="tool" aria-label="Statistics"><svg><use href="#sigma"/></svg></button>
        <span class="sep"></span>
        <button class="tool" aria-label="Set Target District"><svg><use href="#target"/></svg></button>
        <button class="tool" aria-label="Assign Objects"><svg><use href="#assign"/></svg></button>
        <span class="sep"></span>
        <button class="tool" aria-label="Clip Region"><svg><use href="#cliptarget"/></svg></button>
        <button class="tool" aria-label="Set Clip Region"><svg><use href="#clip"/></svg></button>
        <button class="tool" aria-label="Scale Bar"><svg><use href="#scale"/></svg></button>
        <span class="sep"></span>
        <button class="tool" aria-label="List"><svg><use href="#stats"/></svg></button>
      </div>
      <div class="toolbar" role="toolbar" aria-label="Drawing">
        <span class="grip"></span>
        <button class="tool" aria-label="Symbol"><svg><use href="#pin"/></svg></button>
        <button class="tool" aria-label="Line"><svg><use href="#line"/></svg></button>
        <button class="tool" aria-label="Polyline"><svg><use href="#polyline"/></svg></button>
        <button class="tool" aria-label="Arc"><svg><use href="#arc"/></svg></button>
        <button class="tool" aria-label="Polygon"><svg><use href="#polygon"/></svg></button>
        <button class="tool" aria-label="Ellipse"><svg><use href="#ellipse"/></svg></button>
        <button class="tool" aria-label="Rectangle"><svg><use href="#rect"/></svg></button>
        <button class="tool" aria-label="Rounded Rectangle"><svg><use href="#rrect"/></svg></button>
        <button class="tool" aria-label="Text"><svg><use href="#letter"/></svg></button>
        <button class="tool" aria-label="Frame"><svg><use href="#frame"/></svg></button>
        <span class="sep"></span>
        <button class="tool" aria-label="Reshape"><svg><use href="#reshape"/></svg></button>
        <button class="tool" aria-label="Add Node"><svg><use href="#addnode"/></svg></button>
        <span class="sep"></span>
        <button class="tool" aria-label="Symbol Style"><svg><use href="#pinstyle"/></svg></button>
        <button class="tool" aria-label="Line Style"><svg><use href="#linestyle"/></svg></button>
        <button class="tool" aria-label="Region Style"><svg><use href="#regionstyle"/></svg></button>
        <button class="tool" aria-label="Text Style"><svg><use href="#textstyle"/></svg></button>
      </div>
      <div class="toolbar" role="toolbar" aria-label="DBMS">
        <span class="grip"></span>
        <button class="tool" aria-label="Open DBMS Table"><svg><use href="#dbopen"/></svg></button>
        <button class="tool" aria-label="Refresh DBMS Table"><svg><use href="#dbrefresh"/></svg></button>
        <button class="tool" aria-label="Unlink DBMS Table"><svg><use href="#dbunlink"/></svg></button>
        <button class="tool" aria-label="Make DBMS Table Mappable"><svg><use href="#dbmap"/></svg></button>
        <button class="tool" aria-label="Change Symbol"><svg><use href="#dbpin"/></svg></button>
        <button class="tool" aria-label="Edit DBMS Table"><svg><use href="#dbedit"/></svg></button>
      </div>
    </div>
  </div>

  <div class="work">
    <aside class="panel">
      <div class="panelhead">
        <h2 class="paneltitle">Layer Control</h2>
        <button class="headbtn" aria-label="Pin"><svg viewBox="0 0 9 9"><path d="M2.500 5V.5h4V5M5.500 1v4M1 5.500h7M4.500 6v3" fill="none" stroke="#000"/></svg></button>
        <button class="headbtn" aria-label="Close panel"><svg viewBox="0 0 9 9"><path d="M1 1l7 7M8 1L1 8" stroke="#000" stroke-width="1.600"/></svg></button>
      </div>
      <div class="paneltools">
        <div class="group">
          <button class="ptool plain" aria-label="Add layers"><svg><use href="#plus"/></svg></button>
          <button class="ptool" aria-label="Remove layers" disabled><svg><use href="#cross"/></svg></button>
        </div>
        <div class="group">
          <button class="ptool" aria-label="Move up" disabled><svg><use href="#up"/></svg></button>
          <button class="ptool" aria-label="Move down" disabled><svg><use href="#down"/></svg></button>
        </div>
        <div class="group">
          <button class="ptool" aria-label="Layer properties" disabled><svg><use href="#layersgo"/></svg></button>
          <button class="ptool" aria-label="Layer style" disabled><svg><use href="#bucket"/></svg></button>
          <button class="ptool" aria-label="HotLinks" disabled><svg><use href="#linkgo"/></svg></button>
        </div>
      </div>
      <div class="tree">
        <div class="treehead">
          <button class="twist" aria-label="Collapse"><svg viewBox="0 0 7 7"><path d="M7 0v7H0z" fill="#444"/></svg></button>
          <span class="mapname">UTS1 Map</span>
        </div>
        <ul class="layerlist">
          <li class="layer dim">
            <input class="check" type="checkbox" id="cosmetic" checked disabled>
            <span></span>
            <label class="layername" for="cosmetic">Cosmetic Lay</label>
            <button class="state" aria-label="Cosmetic editable"><svg><use href="#edit"/></svg></button>
            <button class="state" aria-label="Cosmetic selectable"><svg><use href="#select"/></svg></button>
          </li>
          <li class="layer main">
            <input class="check" type="checkbox" id="uts" checked>
            <svg class="swatch" viewBox="0 0 25 36"><path d="M0 1l25 16M0 17L25 1" stroke="#b5b5ad" stroke-width="1.500"/><path d="M1.500 20.500l10 3 12-3v14h-22z" fill="#dcdcdc" stroke="#bcbcbc"/></svg>
            <label class="layername" for="uts">UTS1</label>
            <button class="state" aria-label="Editable"><svg><use href="#edit"/></svg></button>
            <button class="state" aria-label="Selectable"><svg><use href="#select"/></svg></button>
            <button class="state off" aria-label="Auto label"><svg><use href="#tag"/></svg></button>
          </li>
        </ul>
      </div>
      <div class="panelfoot">
        <button class="foot" aria-label="Refresh"><svg><use href="#power"/></svg></button>
        <button class="foot" aria-label="Options"><svg><use href="#listgo"/></svg></button>
        <button class="foot" aria-label="Panel help"><svg><use href="#help"/></svg></button>
      </div>
    </aside>

    <main class="mdi">
      <section class="mapwindow" aria-label="UTS1 Map">
        <div class="maphead">
          <svg class="mapicon" viewBox="0 0 17 16"><path d="M.5 1.500h13v12H.5z" fill="#fff" stroke="#222"/><path d="M0 1h14v3H0z" fill="#10107a"/><path d="M2 6h3l1 2-2 3-2-3zM8 6h4l-1 3 1 2-2 1-2-4z" fill="#555"/><path d="M10 7h5v2h-5zM8 10h8v2H8zM7 13h10v2H7z" fill="#f09a28"/></svg>
          <h2 class="title">UTS1 Map</h2>
          <div class="winbuttons">
            <button class="winbtn" aria-label="Minimize map"><svg><use href="#win-min"/></svg></button>
            <button class="winbtn" aria-label="Maximize map"><svg><use href="#win-max"/></svg></button>
            <button class="winbtn close" aria-label="Close map"><svg><use href="#win-close"/></svg></button>
          </div>
        </div>
        <div class="mapview">
          <svg class="map" viewBox="329 132 872 518" role="img" aria-label="Map">
            <defs>
              <pattern id="weave" width="8" height="8" patternUnits="userSpaceOnUse" x="492" y="340">
                <path d="M2 0h1v1H2zM1 1h1v1H1zM0 2h1v1H0zM7 3h1v1H7zM3 4h1v1H3zM4 5h1v1H4zM5 6h1v1H5zM6 7h1v1H6z" fill="#ff7878"/>
              </pattern>
            </defs>
            <path d="M641.500 232.500H723A80 69 0 0 1 723 370.500H715A79.500 68.500 0 0 0 715 507.500H790.500" fill="none" stroke="#c0c0c0" stroke-width="53" stroke-linecap="round" shape-rendering="crispEdges"/>
            <text class="maptext" x="721" y="237">Huruf S</text>
            <ellipse cx="911" cy="426" rx="85.500" ry="59.500" fill="none" stroke="#000" shape-rendering="crispEdges"/>
            <path d="M923 433l-8-4" stroke="#000"/><path d="M910 426l8-3-1 4 1 2-4 4z" fill="#000"/>
            <text class="maptext" x="921" y="445">Elips</text>
            <text class="maptext" x="575" y="386">Persegi</text>
            <path d="M576 385l-27 8" stroke="#000"/><path d="M545 393l5-4v4l1 4z" fill="#000"/>
            <path d="M492 340h106v106H492z" fill="#fff" fill-opacity=".5"/>
            <path d="M492 340h106v106H492z" fill="url(#weave)"/>
            <path d="M492.500 340.500h105v105h-105z" fill="none" stroke="#6e5c5c" shape-rendering="crispEdges"/>
            <path d="M489 337h6v6h-6zM595 337h6v6h-6zM489 443h6v6h-6zM595 443h6v6h-6z" fill="#808080"/>
            <path d="M492 340h3v3h-3zM595 340h3v3h-3zM492 443h3v3h-3zM595 443h3v3h-3z" fill="#222"/>
            <circle cx="610" cy="458" r="4" fill="#707070"/><path d="M610 454a4 4 0 0 1 0 8z" fill="#505050"/>
            <circle cx="1084" cy="609" r="4.500" fill="none" stroke="#000"/>
          </svg>
        </div>
      </section>
    </main>
  </div>

  <footer class="status">
    <span class="cell wide">Zoom: 258.0 mi</span><span class="cell wide">Editing: UTS1</span><span class="cell wide">Selecting: UTS1</span><span class="cell tiny"></span><span class="cell snap">SNAP</span><span class="cell mid"></span><span class="cell last"></span>
  </footer>
</div>
</body>
</html>
```

FILE: styles.css
```css
* { box-sizing: border-box; }

body {
  margin: 0;
  height: 100vh;
  display: flex;
  overflow: hidden;
  font: 12px/16px "Open Sans", "Noto Sans", sans-serif;
  color: #000;
}

button {
  margin: 0;
  padding: 0;
  border: 0;
  background: none;
  font: inherit;
  color: inherit;
  display: flex;
  align-items: center;
  justify-content: center;
}

h1, h2 { margin: 0; font: inherit; }
ul { margin: 0; padding: 0; list-style: none; }
svg { display: block; }
.sprite { position: absolute; width: 0; height: 0; }

/* Taskbar */
.taskbar {
  width: 62px;
  flex: none;
  display: flex;
  flex-direction: column;
  background: #020408;
  color: #fff;
}
.task { height: 31px; flex: none; width: 100%; }
.task svg { width: 16px; height: 16px; }
.running { background: linear-gradient(#76b9ed, #76b9ed) left / 2px 22px no-repeat; }
.current { background: linear-gradient(#76b9ed, #76b9ed) left / 2px 100% no-repeat #303338; }
.tray { margin-top: auto; display: flex; flex-direction: column; align-items: center; gap: 10px; }
.trayicon svg { width: 16px; height: 16px; fill: none; stroke: #fff; stroke-width: 1.200; }
.shifted { margin-left: 28px; }
.traypair { display: flex; gap: 7px; padding-left: 3px; }
.clock { display: grid; justify-items: center; line-height: 17px; font-size: 11px; margin: 9px 0 11px; }
.clock time { white-space: nowrap; }
.desktop { height: 5px; flex: none; border-top: 1px solid #666; }

/* Application frame */
.app { flex: 1; min-width: 0; display: flex; flex-direction: column; }
.titlebar {
  height: 23px;
  flex: none;
  display: flex;
  align-items: center;
  gap: 8px;
  padding: 0 2px;
  border-top: 1px solid #33363c;
  background: linear-gradient(#98b3d1, #b8d0e9);
}
.appicon { width: 16px; height: 16px; }
.title { flex: 1; font-size: 11px; }
.winbuttons { display: flex; gap: 2px; }
.winbtn {
  width: 32px;
  height: 18px;
  border: 1px solid #56697f;
  border-radius: 2px;
  background: linear-gradient(#c3d4e7 45%, #9ab3cf 50%, #b5cce4);
  box-shadow: inset 0 0 0 1px #d3e0ee;
}
.winbtn svg { width: 12px; height: 10px; }
.close {
  border-color: #4a1620;
  background: linear-gradient(#e1a197 45%, #b53c2a 50%, #cf6c52);
  box-shadow: inset 0 0 0 1px #dd9c90;
}

.bars { flex: none; height: 77px; background: linear-gradient(90deg, #9ebdf5, #b5cff8 60%, #c4d9fa); }
.menubar { height: 26px; display: flex; align-items: center; gap: 1px; padding-left: 3px; font-size: 11px; }
.menu { padding: 0 8px; height: 20px; }
.grip {
  width: 7px;
  height: 14px;
  flex: none;
  background: linear-gradient(#27418a 50%, transparent 50%) 3px 0 / 2px 4px repeat-y;
}
.barrow { display: flex; gap: 4px; padding-left: 3px; height: 26px; }
.toolbar {
  height: 25px;
  display: flex;
  align-items: center;
  padding-right: 2px;
  border-bottom: 1px solid #3c69b3;
  border-radius: 3px;
  background: linear-gradient(#dde9fc, #c3d7f8 55%, #8eaee5);
}
.tool { width: 22px; height: 22px; flex: none; }
.tool svg { width: 16px; height: 16px; }
.pressed { border: 1px solid #10107a; background: linear-gradient(#fdc67f, #fdb566); }
.sep { width: 6px; height: 15px; flex: none; background: linear-gradient(90deg, #6f91cc 50%, #fff 50%) center / 2px 100% no-repeat; }

/* Layer panel */
.work { flex: 1; min-height: 0; display: flex; }
.panel {
  width: 258px;
  flex: none;
  display: flex;
  flex-direction: column;
  background: #fff;
  border-right: 4px solid #f0f0f0;
}
.panelhead { height: 20px; margin-right: 1px; display: flex; align-items: center; gap: 6px; padding: 0 3px 0 4px; background: #bfcddb; }
.paneltitle { flex: 1; font-size: 11px; line-height: 20px; }
.headbtn svg { width: 10px; height: 9px; }
.paneltools { display: flex; gap: 14px; padding: 8px 8px 9px; }
.group { display: flex; gap: 4px; }
.ptool { width: 24px; height: 24px; border: 1px solid #a0a0a0; border-radius: 3px; }
.ptool svg { width: 18px; height: 18px; }
.ptool:disabled { opacity: .45; }
.plain { border-color: #ececec; border-bottom-color: #bbb; border-right-color: #ccc; }
.tree { flex: 1; margin: 0 5px; border: 1px solid #828790; padding-top: 2px; }
.treehead { display: flex; align-items: center; gap: 6px; padding-left: 7px; height: 26px; }
.twist { width: 8px; height: 8px; }
.twist svg { width: 7px; height: 7px; }
.mapname { flex: 1; padding-left: 5px; line-height: 26px; font-weight: bold; font-size: 11px; background: linear-gradient(90deg, #d3d3d3, #fff 45px); }
.layer {
  display: grid;
  grid-template-columns: 15px 27px 71px 16px 16px 16px;
  column-gap: 6px;
  padding-left: 46px;
  min-height: 26px;
  align-items: start;
}
.layername { font-size: 11px; line-height: 28px; height: 26px; white-space: nowrap; }
.main .layername { font-weight: bold; }
.check {
  appearance: none;
  width: 13px;
  height: 13px;
  margin: 6px 0;
  border: 1px solid #707070;
  background: #f2f2f4;
}
.check::before {
  content: "";
  display: block;
  width: 4px;
  height: 8px;
  margin: 0 0 0 4px;
  border: solid #22226a;
  border-width: 0 2px 2px 0;
  transform: rotate(40deg);
}
.check:disabled { opacity: .5; }
.swatch { width: 25px; height: 36px; margin-top: 3px; }
.state { width: 16px; height: 26px; }
.state svg { width: 16px; height: 16px; }
.dim .state, .off { filter: grayscale(1); opacity: .4; }
.panelfoot { display: flex; justify-content: flex-end; gap: 8px; padding: 10px 7px 11px; }
.foot { width: 22px; height: 22px; border: 1px solid #ececec; border-bottom-color: #ccc; }
.foot svg { width: 18px; height: 18px; }

/* Map window */
.mdi { flex: 1; min-width: 0; position: relative; background: #9299ae; }
.mapwindow {
  position: absolute;
  inset: 6px 161px 95px 5px;
  display: flex;
  flex-direction: column;
  padding: 1px 3px 3px;
  border: 1px solid #000;
  border-radius: 6px 6px 0 0;
  background: linear-gradient(#98b3d1, #b9d1ea 26px);
  box-shadow: inset 1px 1px #fff, inset -1px -1px #3fc1de;
}
.maphead { height: 24px; flex: none; display: flex; align-items: center; gap: 3px; padding: 0 2px; }
.mapicon { width: 17px; height: 16px; }
.mapview { flex: 1; min-height: 0; overflow: hidden; background: #fff; }
.map { width: 872px; height: 518px; }
.maptext { font: 12px "Liberation Sans", Arial, sans-serif; }

/* Status bar */
.status { height: 20px; flex: none; display: flex; padding: 2px 0 0 1px; background: #f0f0f0; font-size: 11px; }
.cell { height: 18px; flex: none; padding-left: 2px; border: 1px solid #d0d0d0; border-left-width: 0; }
.wide { width: 219px; }
.tiny { width: 28px; }
.snap { width: 36px; }
.mid { width: 71px; }
.last { width: 64px; }
```
